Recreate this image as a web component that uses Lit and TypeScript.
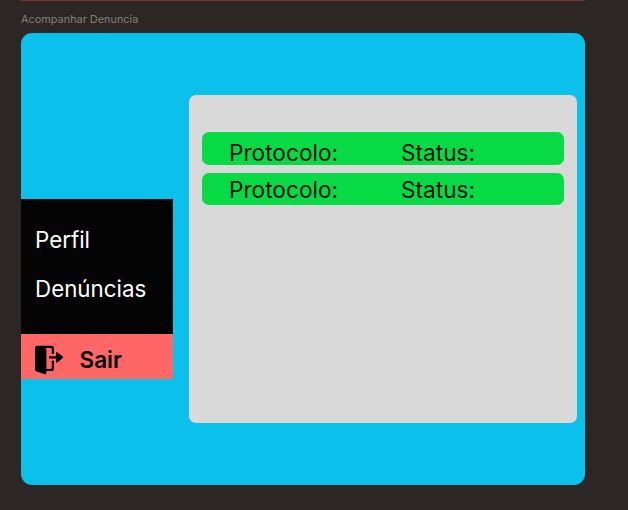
import { LitElement, html, css } from "lit";
import { customElement, state } from "lit/decorators.js";

@customElement("report-row")
class ReportRow extends LitElement {
  static styles = css`
    :host {
      display: grid;
      grid-template-columns: 172px 1fr;
      height: 32.5px;
      box-sizing: border-box;
      padding-left: 27.5px;
      border-radius: 7px;
      background: #08da46;
      color: #04120a;
      font-size: 22.65px;
      line-height: 28px;
    }
    .cell {
      padding-top: var(--label-offset, 3px);
      white-space: nowrap;
    }
  `;

  render() {
    return html`
      <span class="cell">Protocolo:</span>
      <span class="cell">Status:</span>
    `;
  }
}

@customElement("side-menu")
class SideMenu extends LitElement {
  static styles = css`
    :host {
      display: block;
      width: 152px;
      font-size: 22.35px;
      line-height: 28px;
    }
    .links {
      display: flex;
      flex-direction: column;
      gap: 21px;
      height: 135px;
      box-sizing: border-box;
      padding: 27px 0 0 14px;
      background: #040404;
      color: #fff;
    }
    .exit {
      display: flex;
      align-items: center;
      height: 45.5px;
      padding-left: 13px;
      background: #ff6666;
      color: #000;
      box-sizing: border-box;
    }
    .icon {
      width: 30px;
      height: 30px;
      margin-right: 15.5px;
      margin-top: 7px;
    }
    .label {
      font-weight: 600;
      font-size: 22.5px;
      margin-top: 6px;
    }
  `;

  render() {
    return html`
      <nav class="links">
        <span>Perfil</span>
        <span>Denúncias</span>
      </nav>
      <div class="exit">
        <svg class="icon" viewBox="0 0 30 30">
          <path
            d="M3 .8H17.2Q20 .8 20 3.4V8.8H17.8V4.2Q17.8 2.9 16.4 2.9H11L12.4 4.4V24H16.4Q17.8 24 17.8 22.6V15.8H20V23.4Q20 26.1 17.2 26.1H12.4V27.4Q12.4 29.6 10.4 29L2.4 26.6Q1 26.2 1 24.6V2.8Q1 .8 3 .8Z"
          />
          <path d="M15 11.2H22V8.1Q22 6.1 23.6 7.5L28.8 11.5Q29.8 12.3 28.8 13.1L23.6 17.2Q22 18.4 22 16.4V13.4H15Z" />
        </svg>
        <span class="label">Sair</span>
      </div>
    `;
  }
}

@customElement("app-root")
class AppRoot extends LitElement {
  @state() private offsets = [6.5, 3];

  static styles = css`
    :host {
      display: block;
      width: 628px;
      height: 510px;
      overflow: hidden;
      background: #2c2624;
      font-family: Inter, sans-serif;
    }
    .previous {
      width: 564px;
      height: 1px;
      margin-left: 21px;
      background: #763635;
    }
    .title {
      height: 32.4px;
      box-sizing: border-box;
      padding: 10px 0 0 21px;
      font-size: 10.9px;
      line-height: 16px;
      color: #857f7d;
    }
    .frame {
      display: flex;
      align-items: flex-start;
      gap: 16px;
      width: 564.3px;
      height: 451.5px;
      margin-left: 21px;
      border-radius: 11px;
      background: #0bc0ea;
      overflow: hidden;
    }
    side-menu {
      margin-top: 165.6px;
    }
    .panel {
      display: flex;
      flex-direction: column;
      gap: 8px;
      width: 387.5px;
      height: 328.5px;
      margin-top: 61.4px;
      padding: 37.4px 12.5px 0;
      box-sizing: border-box;
      border-radius: 7px;
      background: #d9d9d9;
    }
  `;

  render() {
    return html`
      <div class="previous"></div>
      <div class="title">Acompanhar Denuncia</div>
      <main class="frame">
        <side-menu></side-menu>
        <section class="panel">
          ${this.offsets.map(
            (offset) => html`<report-row style="--label-offset: ${offset}px"></report-row>`
          )}
        </section>
      </main>
    `;
  }
}
